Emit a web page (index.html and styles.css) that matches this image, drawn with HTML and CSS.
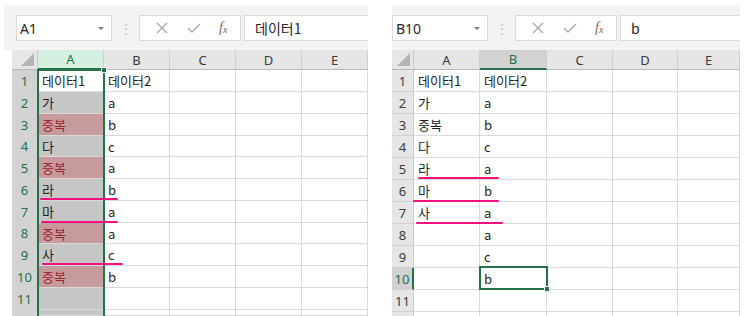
FILE: index.html
```html
<!DOCTYPE html>
<html lang="ko">
<head>
<meta charset="utf-8">
<link rel="stylesheet" href="styles.css">
</head>
<body>
<div class="page">
  <section class="panel panel-left">
    <div class="toolbar">
      <div class="namebox"><span>A1</span><span class="caret"></span></div>
      <div class="dots">⋮</div>
      <div class="fxgroup">
        <svg class="ico" width="14" height="14" viewBox="0 0 14 14"><path d="M2 2 L12 12 M12 2 L2 12" stroke="#a6a6a6" stroke-width="1.2" fill="none"/></svg>
        <svg class="ico" width="16" height="14" viewBox="0 0 16 14"><path d="M2 7 L6 11 L14 3" stroke="#a6a6a6" stroke-width="1.3" fill="none"/></svg>
        <span class="fx">f<sub>x</sub></span>
      </div>
      <div class="formula">데이터1</div>
    </div>
    <div class="sheet">
      <div class="grid grid-left">
        <div class="corner"><span class="tri"></span></div>
        <div class="ch ch-sel-green">A</div><div class="ch">B</div><div class="ch">C</div><div class="ch">D</div><div class="ch">E</div>

        <div class="rh rh-sel">1</div><div class="c c-active">데이터1</div><div class="c">데이터2</div><div class="c"></div><div class="c"></div><div class="c"></div>
        <div class="rh rh-sel">2</div><div class="c c-sel">가</div><div class="c">a</div><div class="c"></div><div class="c"></div><div class="c"></div>
        <div class="rh rh-sel">3</div><div class="c c-dup">중복</div><div class="c">b</div><div class="c"></div><div class="c"></div><div class="c"></div>
        <div class="rh rh-sel">4</div><div class="c c-sel">다</div><div class="c">c</div><div class="c"></div><div class="c"></div><div class="c"></div>
        <div class="rh rh-sel">5</div><div class="c c-dup">중복</div><div class="c">a</div><div class="c"></div><div class="c"></div><div class="c"></div>
        <div class="rh rh-sel">6</div><div class="c c-sel">라</div><div class="c">b</div><div class="c"></div><div class="c"></div><div class="c"></div>
        <div class="rh rh-sel">7</div><div class="c c-sel">마</div><div class="c">a</div><div class="c"></div><div class="c"></div><div class="c"></div>
        <div class="rh rh-sel">8</div><div class="c c-dup">중복</div><div class="c">a</div><div class="c"></div><div class="c"></div><div class="c"></div>
        <div class="rh rh-sel">9</div><div class="c c-sel">사</div><div class="c">c</div><div class="c"></div><div class="c"></div><div class="c"></div>
        <div class="rh rh-sel">10</div><div class="c c-dup">중복</div><div class="c">b</div><div class="c"></div><div class="c"></div><div class="c"></div>
        <div class="rh rh-sel">11</div><div class="c c-sel"></div><div class="c"></div><div class="c"></div><div class="c"></div><div class="c"></div>
        <div class="rh rh-sel"></div><div class="c c-sel"></div><div class="c"></div><div class="c"></div><div class="c"></div><div class="c"></div>
      </div>
      <div class="selbox selbox-left"><span class="handle handle-tr"></span></div>
      <div class="mark" style="left:28px;top:148px;width:78px"></div>
      <div class="mark" style="left:29px;top:171px;width:77px"></div>
      <div class="mark" style="left:30px;top:213px;width:81px"></div>
    </div>
  </section>

  <section class="panel panel-right">
    <div class="toolbar toolbar-right">
      <div class="namebox"><span>B10</span><span class="caret"></span></div>
      <div class="dots">⋮</div>
      <div class="fxgroup">
        <svg class="ico" width="14" height="14" viewBox="0 0 14 14"><path d="M2 2 L12 12 M12 2 L2 12" stroke="#a6a6a6" stroke-width="1.2" fill="none"/></svg>
        <svg class="ico" width="16" height="14" viewBox="0 0 16 14"><path d="M2 7 L6 11 L14 3" stroke="#a6a6a6" stroke-width="1.3" fill="none"/></svg>
        <span class="fx">f<sub>x</sub></span>
      </div>
      <div class="formula">b</div>
    </div>
    <div class="sheet">
      <div class="grid grid-right">
        <div class="corner"><span class="tri"></span></div>
        <div class="ch">A</div><div class="ch ch-sel">B</div><div class="ch">C</div><div class="ch">D</div><div class="ch">E</div>

        <div class="rh">1</div><div class="c">데이터1</div><div class="c">데이터2</div><div class="c"></div><div class="c"></div><div class="c"></div>
        <div class="rh">2</div><div class="c">가</div><div class="c">a</div><div class="c"></div><div class="c"></div><div class="c"></div>
        <div class="rh">3</div><div class="c">중복</div><div class="c">b</div><div class="c"></div><div class="c"></div><div class="c"></div>
        <div class="rh">4</div><div class="c">다</div><div class="c">c</div><div class="c"></div><div class="c"></div><div class="c"></div>
        <div class="rh">5</div><div class="c">라</div><div class="c">a</div><div class="c"></div><div class="c"></div><div class="c"></div>
        <div class="rh">6</div><div class="c">마</div><div class="c">b</div><div class="c"></div><div class="c"></div><div class="c"></div>
        <div class="rh">7</div><div class="c">사</div><div class="c">a</div><div class="c"></div><div class="c"></div><div class="c"></div>
        <div class="rh">8</div><div class="c"></div><div class="c">a</div><div class="c"></div><div class="c"></div><div class="c"></div>
        <div class="rh">9</div><div class="c"></div><div class="c">c</div><div class="c"></div><div class="c"></div><div class="c"></div>
        <div class="rh rh-cur">10</div><div class="c"></div><div class="c">b</div><div class="c"></div><div class="c"></div><div class="c"></div>
        <div class="rh">11</div><div class="c"></div><div class="c"></div><div class="c"></div><div class="c"></div><div class="c"></div>
        <div class="rh"></div><div class="c"></div><div class="c"></div><div class="c"></div><div class="c"></div><div class="c"></div>
      </div>
      <div class="selbox selbox-right"><span class="handle handle-br"></span></div>
      <div class="mark" style="left:26px;top:127px;width:81px"></div>
      <div class="mark" style="left:21px;top:150px;width:86px"></div>
      <div class="mark" style="left:24px;top:172px;width:87px"></div>
    </div>
  </section>
</div>
</body>
</html>
```

FILE: styles.css
```css
* { box-sizing: border-box; }
html, body { margin: 0; padding: 0; background: #ffffff; }
body { width: 753px; height: 316px; overflow: hidden; font-family: "Noto Sans CJK KR", "Noto Sans", sans-serif; }

.page { display: flex; padding-top: 5px; }

.panel { display: flex; flex-direction: column; }
.panel-left { width: 364px; margin-left: 4px; }
.panel-right { width: 348px; margin-left: 24px; }

.toolbar {
  height: 45px;
  background: #f3f3f3;
  display: flex;
  align-items: flex-start;
  padding: 10px 0 0 12px;
}
.toolbar-right { padding-left: 0; }

.namebox {
  width: 96px; height: 26px;
  background: #fff;
  border: 1px solid #dadada;
  display: flex; align-items: center; justify-content: space-between;
  padding: 0 7px 0 3px;
  font-family: "Noto Sans", sans-serif;
  font-size: 14px; color: #262626;
}
.caret {
  width: 0; height: 0;
  border-left: 3px solid transparent; border-right: 3px solid transparent;
  border-top: 3px solid #7a7a7a;
}
.dots { width: 27px; text-align: center; color: #c6c6c6; font-size: 14px; line-height: 26px; }
.fxgroup {
  width: 102px; height: 26px;
  background: #fff; border: 1px solid #dadada;
  display: flex; align-items: center; justify-content: space-around;
  padding: 0 4px 0 6px;
}
.fx { font-family: "Liberation Serif", serif; font-style: italic; font-size: 14px; color: #6b6b6b; }
.fx sub { font-size: 10px; vertical-align: -1px; }
.formula {
  flex: 1; height: 26px; margin-left: 3px;
  background: #fff; border: 1px solid #dadada; border-right: none;
  font-size: 14px; color: #262626; line-height: 24px; padding-left: 10px;
}

.sheet { position: relative; }
.panel-left .sheet { margin-left: 8px; }

.grid { display: grid; font-size: 13px; color: #1e1e1e; }
.grid-left {
  grid-template-columns: 26px repeat(5, 66px);
  grid-template-rows: 20px 22px 22px 22px 21px 22px 22px 22px 21px 22px 22px 22px 6px;
}
.grid-right {
  grid-template-columns: 22px 66px 67px 66px 65px 62px;
  grid-template-rows: 20px 22px 22px 22px 22px 22px 22px 22px 22px 22px 22px 22px 6px;
}

.corner { background: #e6e6e6; border-right: 1px solid #c9c9c9; border-bottom: 1px solid #b8b8b8; position: relative; }
.tri {
  position: absolute; right: 3px; bottom: 3px;
  width: 0; height: 0;
  border-left: 13px solid transparent; border-bottom: 13px solid #b4b4b4;
}
.ch {
  background: #e6e6e6; border-right: 1px solid #cfcfcf; border-bottom: 1px solid #b8b8b8;
  display: flex; align-items: center; justify-content: center;
  font-family: "Noto Sans", sans-serif; font-size: 13px; color: #3b3b3b;
}
.ch-sel-green { background: #d3f0e0; color: #217346; border-bottom: 2px solid #217346; }
.ch-sel { background: #d2d2d2; color: #217346; border-bottom: 2px solid #217346; }

.rh {
  background: #e6e6e6; border-right: 1px solid #c9c9c9; border-bottom: 1px solid #d2d2d2;
  display: flex; align-items: center; justify-content: center;
  font-family: "Noto Sans", sans-serif; font-size: 13px; color: #3b3b3b;
}
.rh-sel { background: #d2d2d2; color: #217346; }
.rh-cur { background: #d2d2d2; color: #217346; border-right: 2px solid #217346; }

.c {
  border-right: 1px solid #dadada; border-bottom: 1px solid #dadada;
  display: flex; align-items: center;
  padding-left: 4px; white-space: nowrap; overflow: visible;
  font-size: 13px;
}
.c-sel { background: #c6c6c6; }
.c-active { background: #ffffff; }
.c-dup { background: #c79a9e; color: #9a2630; }

.selbox { position: absolute; border: 2px solid #217346; pointer-events: none; }
.selbox-left { left: 25px; top: 19px; width: 68px; bottom: -4px; }
.selbox-right { left: 87px; top: 216px; width: 69px; height: 24px; }
.handle { position: absolute; width: 6px; height: 6px; background: #217346; border: 1px solid #fff; }
.handle-tr { right: -4px; top: -4px; }
.handle-br { right: -4px; bottom: -4px; }

.mark { position: absolute; height: 2px; background: #f0137f; border-radius: 1px; }
```
